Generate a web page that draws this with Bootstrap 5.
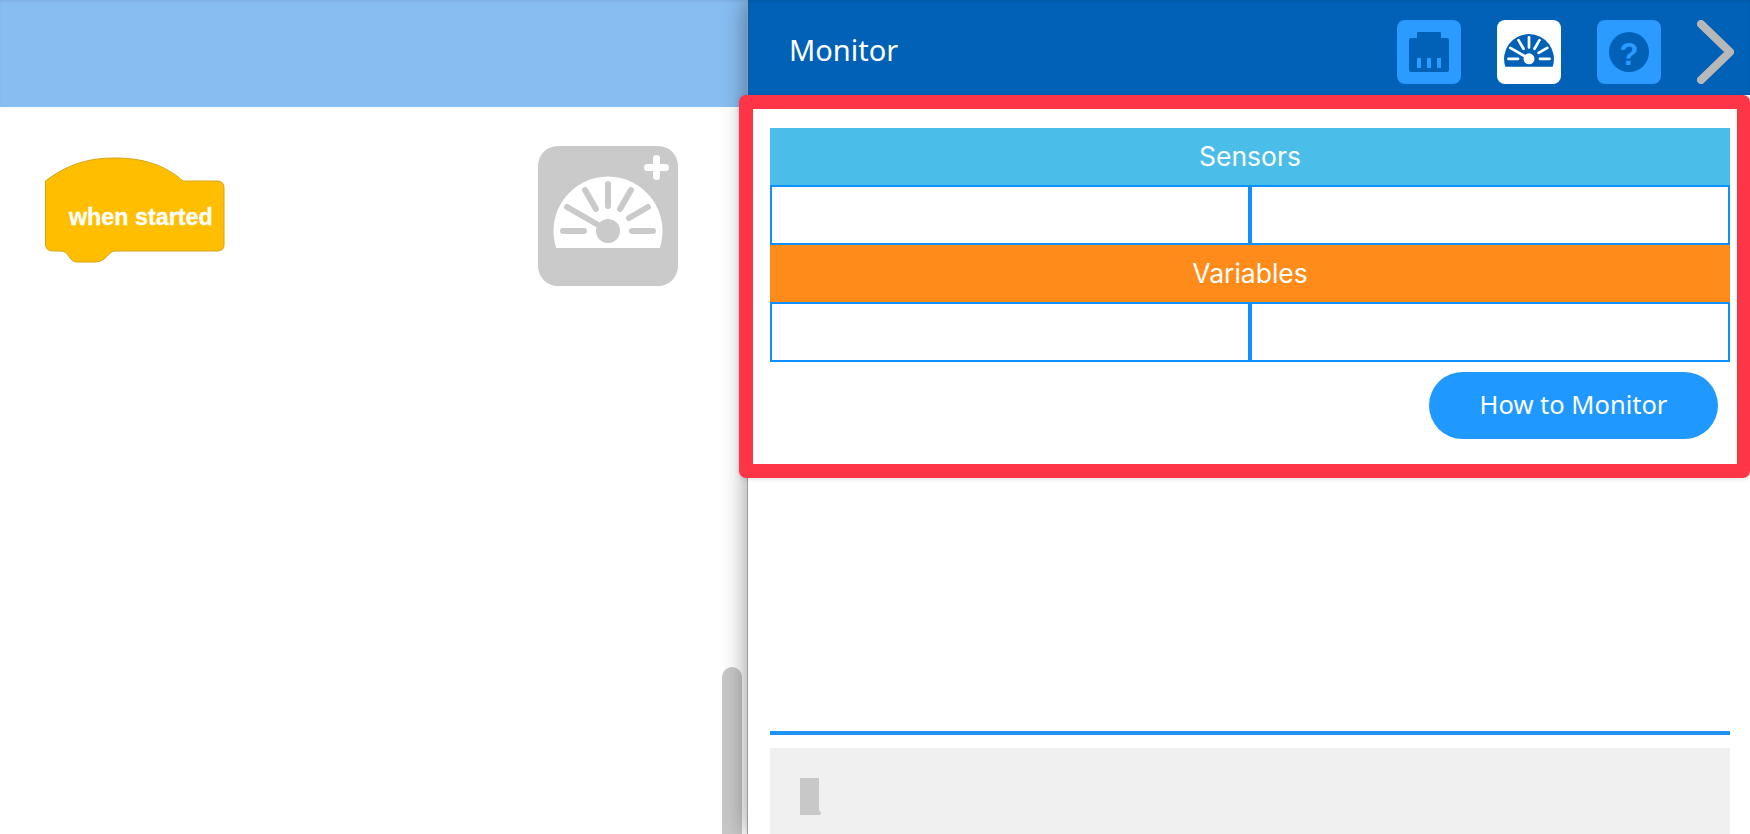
<!DOCTYPE html>
<html lang="en">
  <head>
    <meta charset="UTF-8" />
    <meta name="viewport" content="width=device-width, initial-scale=1.0" />
    <title>Monitor</title>
    <link
      rel="stylesheet"
      href="https://cdn.jsdelivr.net/npm/bootstrap@5.3.0/dist/css/bootstrap.min.css"
    />
    <style>
      body {
        font-family: "Noto Sans", "Open Sans", sans-serif;
        height: 834px;
        overflow: hidden;
      }
      .app-shell {
        height: 834px;
      }
      /* left side: blocks workspace */
      .workspace {
        width: 748px;
        position: relative;
      }
      .workspace-bar {
        height: 107px;
        background-color: #88bdf2;
        box-shadow: inset 0 2px 2px rgba(0, 0, 0, 0.06);
      }
      .workspace-body {
        padding: 50px 70px 0 45px;
      }
      .start-block {
        width: 180px;
        height: 106px;
      }
      .start-block text {
        font-family: "Liberation Sans", Arial, sans-serif;
        font-weight: 700;
        font-size: 23.3px;
        fill: #fff;
        stroke: #fff;
        stroke-width: 0.3px;
      }
      .add-monitor {
        width: 140px;
        height: 140px;
        margin-top: -11px;
        color: #fff;
        --tick: #cacaca;
      }
      .scroll-thumb {
        position: absolute;
        left: 722px;
        top: 667px;
        bottom: -20px;
        width: 20px;
        border-radius: 10px;
        background-color: #c8c8c8;
      }
      /* right side: monitor panel */
      .monitor-panel {
        width: 1002px;
        position: relative;
        background-color: #fff;
        box-shadow: -1px 0 0 #9a9a9a, 0 0 24px rgba(0, 0, 0, 0.45);
      }
      .monitor-head {
        height: 95px;
        background-color: #0061b7;
        box-shadow: inset 0 2px 2px rgba(0, 0, 0, 0.08);
        padding: 20px 16px 0 41px;
      }
      .monitor-title {
        font-size: 29px;
        line-height: 1;
        color: #fff;
        margin-top: 15px;
      }
      .tool-group {
        gap: 36px;
      }
      .tool-btn {
        width: 64px;
        height: 64px;
        border-radius: 8px;
        background-color: #2b9bff;
        color: #0061b7;
        --tick: #fff;
        --sym: #2b9bff;
      }
      .tool-btn.is-active {
        background-color: #fff;
      }
      .tool-btn svg,
      .add-monitor svg {
        display: block;
      }
      .chevron-btn {
        width: 37px;
        height: 64px;
      }
      .monitor-body {
        padding: 33px 20px 0 22px;
      }
      .band {
        height: 57px;
        font-family: Inter, Roboto, sans-serif;
        font-size: 26.5px;
        color: #fff;
      }
      .band-sensors {
        background-color: #4abde8;
      }
      .band-variables {
        background-color: #ff8c1a;
      }
      .value-cell {
        height: 60px;
        border: 2px solid #0f90ff;
      }
      .monitor-action {
        padding: 10px 12px 0 0;
      }
      .how-btn {
        width: 289px;
        height: 67px;
        padding: 0 0 2px;
        border: 0;
        border-radius: 34px;
        background-color: #1f99ff;
        color: #fff;
        font-size: 25.5px;
      }
      .console-rule {
        height: 4px;
        margin-top: 292px;
        background-color: #1f93f5;
      }
      .console-box {
        margin-top: 13px;
        height: 120px;
        background-color: #f0f0f0;
        padding: 30px;
      }
      .console-caret {
        width: 19px;
        height: 37px;
        position: relative;
        background-color: #c8c8c8;
      }
      .console-caret::after {
        content: "";
        position: absolute;
        right: -2px;
        bottom: 0;
        width: 2px;
        height: 4px;
        border-radius: 0 2px 2px 0;
        background-color: #c8c8c8;
      }
      /* red annotation frame lying over the panel */
      .callout-frame {
        position: absolute;
        left: -9px;
        top: 95px;
        right: 0;
        height: 383px;
        border: 14px solid #fd3546;
        border-right-width: 13px;
        border-radius: 7px;
        box-shadow: 0 1px 5px rgba(0, 0, 0, 0.12);
        pointer-events: none;
      }
    </style>
  </head>
  <body>
    <svg width="0" height="0" class="position-absolute">
      <symbol id="gauge" viewBox="0 0 140 140">
        <path d="M18.2 102A54.5 54.5 0 1 1 121.8 102Z" fill="currentColor" />
        <g stroke="var(--tick)" stroke-width="6" stroke-linecap="round" fill="none">
          <path d="M25 85H46M94 85H115M70 38V60M47 44L58 63M93 44L82 63M91 72L110 61M29 61L62 80" />
        </g>
        <circle cx="70" cy="85" r="12" fill="var(--tick)" />
      </symbol>
    </svg>

    <div class="app-shell d-flex">
      <div class="workspace">
        <div class="workspace-bar"></div>
        <div class="workspace-body d-flex justify-content-between align-items-start">
          <svg class="start-block" viewBox="0 0 180 106">
            <path
              d="M0.5 24C24 6 46 1 70 1C98 1 120 8 138 24H172Q179 24 179 31V88Q179 94 172 94H70C63 94 62 105 50 105H32C24 105 24 94 16 94H8Q0.5 94 0.5 87Z"
              fill="#ffbf00"
              stroke="#d7a313"
              stroke-width="1"
            />
            <text x="24" y="68">when started</text>
          </svg>
          <div class="add-monitor position-relative">
            <svg width="140" height="140" viewBox="0 0 140 140">
              <rect width="140" height="140" rx="20" fill="#cacaca" />
              <use href="#gauge" width="140" height="140" />
              <path d="M109.5 21.5H127.5M118.5 12.5V30.5" stroke="#fff" stroke-width="7" stroke-linecap="round" />
            </svg>
          </div>
        </div>
        <div class="scroll-thumb"></div>
      </div>

      <div class="monitor-panel">
        <div class="monitor-head d-flex">
          <div class="monitor-title flex-grow-1">Monitor</div>
          <div class="tool-group d-flex">
            <div class="tool-btn">
              <svg width="64" height="64" viewBox="0 0 64 64">
                <path d="M21 12H43Q44 12 44 13V18H50Q52 18 52 20V50Q52 52 50 52H14Q12 52 12 50V20Q12 18 14 18H20V13Q20 12 21 12Z" fill="currentColor" />
                <path d="M20 38H24V48H20ZM30 38H34V48H30ZM40 38H44V48H40Z" fill="var(--sym)" />
              </svg>
            </div>
            <div class="tool-btn is-active">
              <svg width="64" height="64"><use href="#gauge" width="64" height="64" /></svg>
            </div>
            <div class="tool-btn">
              <svg width="64" height="64" viewBox="0 0 64 64">
                <circle cx="32" cy="32" r="20" fill="currentColor" />
                <text
                  x="32"
                  y="44.5"
                  text-anchor="middle"
                  font-family="Liberation Sans, sans-serif"
                  font-weight="700"
                  font-size="31"
                  fill="#2b9bff"
                >?</text>
              </svg>
            </div>
            <div class="chevron-btn">
              <svg width="37" height="64" viewBox="0 0 37 64">
                <path d="M4 4L33 32L4 60" fill="none" stroke="#b8b8b8" stroke-width="8" stroke-linecap="round" stroke-linejoin="round" />
              </svg>
            </div>
          </div>
        </div>

        <div class="monitor-body">
          <div class="band band-sensors d-flex align-items-center justify-content-center">Sensors</div>
          <div class="row g-0">
            <div class="col-6 value-cell"></div>
            <div class="col-6 value-cell"></div>
          </div>
          <div class="band band-variables d-flex align-items-center justify-content-center">Variables</div>
          <div class="row g-0">
            <div class="col-6 value-cell"></div>
            <div class="col-6 value-cell"></div>
          </div>
          <div class="monitor-action d-flex justify-content-end">
            <button type="button" class="how-btn">How to Monitor</button>
          </div>
          <div class="console-rule"></div>
          <div class="console-box">
            <div class="console-caret"></div>
          </div>
        </div>

        <div class="callout-frame"></div>
      </div>
    </div>

    <script src="https://cdn.jsdelivr.net/npm/bootstrap@5.3.0/dist/js/bootstrap.bundle.min.js"></script>
  </body>
</html>
